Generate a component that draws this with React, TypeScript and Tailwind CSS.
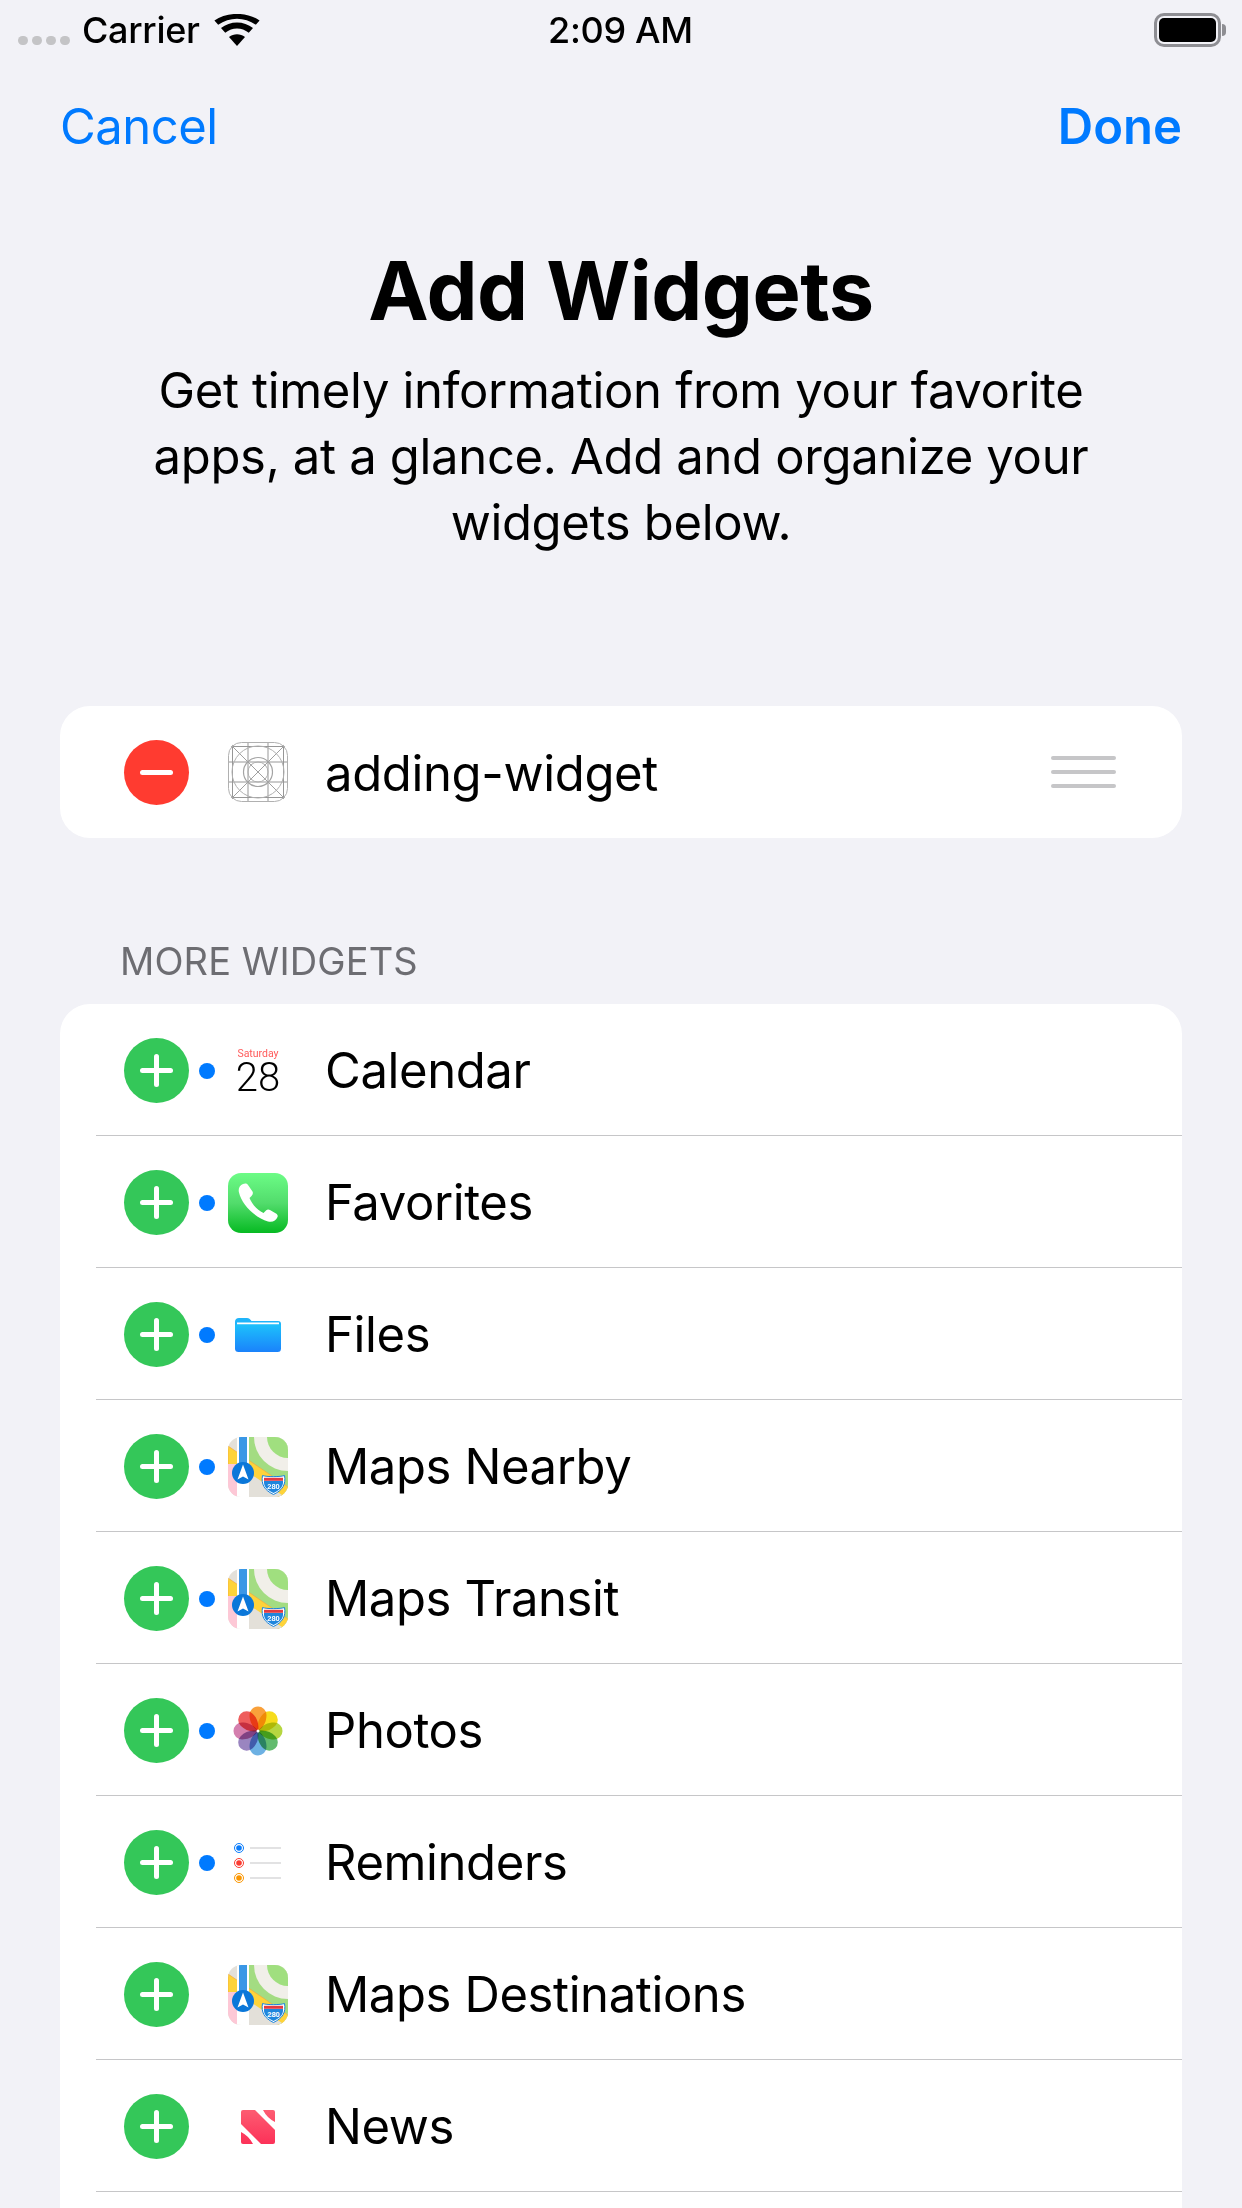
import type { ReactNode } from 'react';

const font = { fontFamily: 'Inter, sans-serif' };

function Wifi() {
  return (
    <svg width="46" height="32" viewBox="0 0 48 34" className="block">
      <path d="M24 34 L15.5 24.5 C20.5 20.5 27.5 20.5 32.5 24.5 Z" fill="#000" />
      <path d="M11.5 20 L7 15 C16.5 7 31.5 7 41 15 L36.5 20 C29 14 19 14 11.5 20 Z" fill="#000" />
      <path d="M4 11.5 L0 7 C13 -2.5 35 -2.5 48 7 L44 11.5 C32 3 16 3 4 11.5 Z" fill="#000" />
    </svg>
  );
}

function StatusBar() {
  return (
    <div className="relative flex h-[60px] items-center justify-between pl-[18px] pr-[16px]">
      <div className="flex items-center">
        <div className="flex gap-[4px] pt-[20px]">
          {[0, 1, 2, 3].map((i) => (
            <div key={i} className="h-[9px] w-[10px] rounded-full bg-[#c4c4c6]" />
          ))}
        </div>
        <span className="ml-[12px] text-[36px] font-medium leading-none tracking-[-0.3px] text-black">Carrier</span>
        <span className="ml-[14px] mt-[-1px]"><Wifi /></span>
      </div>
      <span className="absolute left-[548px] top-[12px] text-[36px] font-medium leading-none tracking-[-0.3px] text-black">2:09 AM</span>
      <div className="flex items-center">
        <div className="h-[34px] w-[67px] rounded-[10px] border-[3px] border-[#8e8e93] p-[2px]">
          <div className="h-full w-full rounded-[5px] bg-black" />
        </div>
        <div className="ml-[1px] h-[12px] w-[4px] rounded-r-full bg-[#8e8e93]" />
      </div>
    </div>
  );
}

function GridIcon() {
  return (
    <svg width="60" height="60" viewBox="0 0 60 60" fill="none">
      <defs>
        <clipPath id="gc">
          <rect width="60" height="60" rx="13" />
        </clipPath>
      </defs>
      <g clipPath="url(#gc)">
        <path d="M4.500 0V60M55.500 0V60M0 4.500H60M0 55.500H60M20 0V60M40 0V60M0 20H60M0 40H60" stroke="#979797" strokeWidth="1" />
        <path d="M4 4L56 56M56 4L4 56" stroke="#a0a0a0" strokeWidth="1" />
        <circle cx="30" cy="30" r="26" stroke="#b0b0b0" strokeWidth="1" />
        <circle cx="30" cy="30" r="14.500" stroke="#a4a4a4" strokeWidth="1.200" />
        <circle cx="30" cy="30" r="10" stroke="#b0b0b0" strokeWidth="1" />
      </g>
      <rect x="0.500" y="0.500" width="59" height="59" rx="13" stroke="#b0b0b0" strokeWidth="1" />
    </svg>
  );
}

function CalendarIcon() {
  return (
    <div className="flex h-[60px] w-[60px] flex-col items-center text-center" style={{ fontFamily: 'Roboto, sans-serif' }}>
      <div className="mt-[7px] h-[11px] text-[10.500px] leading-[11px] text-[#ff5a5a]">Saturday</div>
      <div className="mt-[3px] text-[40px] font-light leading-[32px] text-black">28</div>
    </div>
  );
}

function PhoneIcon() {
  return (
    <svg width="60" height="60" viewBox="0 0 60 60">
      <defs>
        <linearGradient id="ph" x1="0" y1="0" x2="0" y2="1">
          <stop offset="0" stopColor="#6cfc86" />
          <stop offset="0.5" stopColor="#52dc6c" />
          <stop offset="1" stopColor="#06ba22" />
        </linearGradient>
      </defs>
      <rect width="60" height="60" rx="13" fill="url(#ph)" />
      <path d="M15 11 C11.500 12.500 10 15.500 11 19.500 C13.500 31 27 45 40 48.500 C44.500 49.500 48 48 49.500 44 C50 42.500 49.500 41.500 48 40.500 L42 37 C40.500 36 39 36.500 38 37.500 L35.500 40 C29 37 24 31 21.500 25 L23.500 23 C25 21.500 25.200 20 24.500 18.500 L20 12 C18.800 10.300 17 10.200 15 11 Z" fill="#fff" />
    </svg>
  );
}

function FilesIcon() {
  return (
    <svg width="60" height="60" viewBox="0 0 60 60">
      <defs>
        <linearGradient id="fl" x1="0" y1="0" x2="0" y2="1">
          <stop offset="0" stopColor="#1dc1fb" />
          <stop offset="1" stopColor="#1a82fb" />
        </linearGradient>
      </defs>
      <path d="M7 17 C7 14.500 8.500 13 11 13 H19 C21 13 22 14 23.500 16 H50 C52 16 53 17 53 19 V24 H7 Z" fill="#1fb4fa" />
      <rect x="9" y="17.500" width="42" height="2" fill="#fff" />
      <path d="M7 21 Q7 19.500 8.500 19.500 H51.500 Q53 19.500 53 21 V43.500 Q53 47 49.500 47 H10.500 Q7 47 7 43.500 Z" fill="url(#fl)" />
    </svg>
  );
}

function MapsIcon({ id }: { id: string }) {
  return (
    <svg width="60" height="60" viewBox="0 0 60 60">
      <defs>
        <clipPath id={id}>
          <rect width="60" height="60" rx="13" />
        </clipPath>
      </defs>
      <g clipPath={`url(#${id})`}>
        <rect width="60" height="60" fill="#e3e0d9" />
        <rect x="21" width="39" height="60" fill="#a3dc82" />
        <circle cx="60" cy="0" r="34" fill="#f1efe9" />
        <circle cx="60" cy="0" r="21" fill="#a0df7f" />
        <path d="M21 24 L60 50 V60 H21 Z" fill="#e3e0d9" />
        <path d="M0 9 L60 50 V66 L0 27 Z" fill="#fed33a" stroke="#f3a93a" strokeWidth="0.700" />
        <path d="M21 36 L60 62 V70 H21 Z" fill="#e3e0d9" />
        <rect x="0" y="27" width="9" height="33" fill="#fdc8d6" />
        <rect x="9" y="0" width="12" height="60" fill="#fff" />
        <rect x="11" y="0" width="8" height="36" fill="#3a97e6" />
        <circle cx="15" cy="36" r="11" fill="#0a77d9" />
        <path d="M15 27.500 L20.500 42.500 L15 39.500 L9.500 42.500 Z" fill="#fff" />
        <path d="M34.500 38.500 C38 40 53 40 56.500 38.500 C58 47 55 53 45.500 57.500 C36 53 33 47 34.500 38.500 Z" fill="#fff" stroke="#1a84dc" strokeWidth="1" />
        <path d="M36 44 H55 C55.500 49 52.500 53 45.500 56 C38.500 53 35.500 49 36 44 Z" fill="#1f86dd" />
        <rect x="36" y="40.800" width="19" height="3" fill="#e23a42" />
        <text x="45.500" y="52" textAnchor="middle" fontSize="7.500" fontWeight="700" fill="#fff" fontFamily="Liberation Sans, sans-serif">280</text>
      </g>
    </svg>
  );
}

function PhotosIcon() {
  const colors = ['#f9a03a', '#f6dc1c', '#b6d640', '#62bb6e', '#6db1e3', '#9a85c0', '#d47fae', '#ee5d5d'];
  return (
    <svg width="60" height="60" viewBox="0 0 60 60">
      {colors.map((c, i) => (
        <g key={c} transform={`rotate(${i * 45} 30 30)`} className="mix-blend-multiply">
          <path d="M30 30 C24 26 21.500 20 21.500 14 A8.500 8.500 0 0 1 38.500 14 C38.500 20 36 26 30 30 Z" fill={c} />
        </g>
      ))}
      <circle cx="30" cy="30" r="1.500" fill="#fff" />
    </svg>
  );
}

function RemindersIcon() {
  const colors = ['#0a7cfb', '#fb3b30', '#fb9600'];
  return (
    <svg width="60" height="60" viewBox="0 0 60 60">
      {colors.map((c, i) => (
        <g key={c}>
          <circle cx="11" cy={15 + i * 15} r="4.500" fill="#fff" stroke={c} strokeWidth="1" />
          <circle cx="11" cy={15 + i * 15} r="2.800" fill={c} />
          <rect x="22" y={14.500 + i * 15} width="31" height="1" fill="#c6c6c8" />
        </g>
      ))}
    </svg>
  );
}

function NewsIcon() {
  return (
    <svg width="60" height="60" viewBox="0 0 60 60">
      <defs>
        <linearGradient id="nw" x1="0" y1="0" x2="0" y2="1">
          <stop offset="0" stopColor="#fd5c72" />
          <stop offset="1" stopColor="#fc3158" />
        </linearGradient>
        <clipPath id="nc">
          <rect x="13" y="13" width="34" height="34" rx="2" />
        </clipPath>
      </defs>
      <g clipPath="url(#nc)">
        <rect x="13" y="13" width="34" height="34" fill="url(#nw)" />
        <path d="M27 13 H35 Q39 21 47 25 V33 Z" fill="#fff" />
        <path d="M13 27 L33 47 H25 Q21 39 13 35 Z" fill="#fff" />
      </g>
    </svg>
  );
}

function Circle({ kind }: { kind: 'add' | 'remove' }) {
  return (
    <div className={`relative h-[65px] w-[65px] shrink-0 rounded-full ${kind === 'add' ? 'bg-[#34c759]' : 'bg-[#ff3b30]'}`}>
      <div className="absolute left-[16px] top-[30px] h-[5px] w-[33px] rounded-full bg-white" />
      {kind === 'add' && <div className="absolute left-[30px] top-[16px] h-[33px] w-[5px] rounded-full bg-white" />}
    </div>
  );
}

const rows: { label: string; dot: boolean; icon: ReactNode }[] = [
  { label: 'Calendar', dot: true, icon: <CalendarIcon /> },
  { label: 'Favorites', dot: true, icon: <PhoneIcon /> },
  { label: 'Files', dot: true, icon: <FilesIcon /> },
  { label: 'Maps Nearby', dot: true, icon: <MapsIcon id="m1" /> },
  { label: 'Maps Transit', dot: true, icon: <MapsIcon id="m2" /> },
  { label: 'Photos', dot: true, icon: <PhotosIcon /> },
  { label: 'Reminders', dot: true, icon: <RemindersIcon /> },
  { label: 'Maps Destinations', dot: false, icon: <MapsIcon id="m3" /> },
  { label: 'News', dot: false, icon: <NewsIcon /> },
];

function Row({ label, dot, icon }: { label: string; dot: boolean; icon: ReactNode }) {
  return (
    <div className="ml-[36px] flex h-[132px] items-center border-b border-[#c6c6c8] pl-[28px] pt-[2px]">
      <Circle kind="add" />
      <div className="ml-[10px] flex w-[29px] shrink-0">
        {dot && <div className="h-[16px] w-[16px] rounded-full bg-[#007aff]" />}
      </div>
      {icon}
      <span className="ml-[37px] text-[49px] leading-none tracking-[-0.4px] text-black">{label}</span>
    </div>
  );
}

export default function App() {
  return (
    <div className="h-[2208px] w-[1242px] overflow-hidden bg-[#f2f2f7]" style={font}>
      <StatusBar />
      <div className="flex h-[134px] items-center justify-between px-[60px] pb-[2px] text-[49px] leading-none text-[#007aff]">
        <span className="tracking-[-0.5px]">Cancel</span>
        <span className="font-semibold">Done</span>
      </div>
      <h1 className="mt-[52px] text-center text-[81px] font-bold leading-[90px] tracking-[-0.5px] text-black">Add Widgets</h1>
      <p className="mx-auto mt-[22px] w-[1000px] text-center text-[49px] leading-[66px] tracking-[-0.33px] text-black">
        Get timely information from your favorite<br />apps, at a glance. Add and organize your<br />widgets below.
      </p>
      <div className="mx-[60px] mt-[150px] flex h-[132px] items-center rounded-[30px] bg-white pl-[64px] pr-[66px]">
        <Circle kind="remove" />
        <div className="ml-[39px]"><GridIcon /></div>
        <span className="ml-[37px] flex-1 pt-[2px] text-[49px] leading-none tracking-[-0.35px] text-black">adding-widget</span>
        <div className="flex w-[65px] flex-col gap-[10px]">
          <div className="h-[4px] rounded-full bg-[#c6c6c8]" />
          <div className="h-[4px] rounded-full bg-[#c6c6c8]" />
          <div className="h-[4px] rounded-full bg-[#c6c6c8]" />
        </div>
      </div>
      <div className="ml-[120px] mt-[99px] text-[38px] leading-[48px] tracking-[0.1px] text-[#6d6d72]">MORE WIDGETS</div>
      <div className="mx-[60px] mt-[19px] rounded-t-[30px] bg-white pb-[132px]">
        {rows.map((r) => (
          <Row key={r.label} {...r} />
        ))}
      </div>
    </div>
  );
}
